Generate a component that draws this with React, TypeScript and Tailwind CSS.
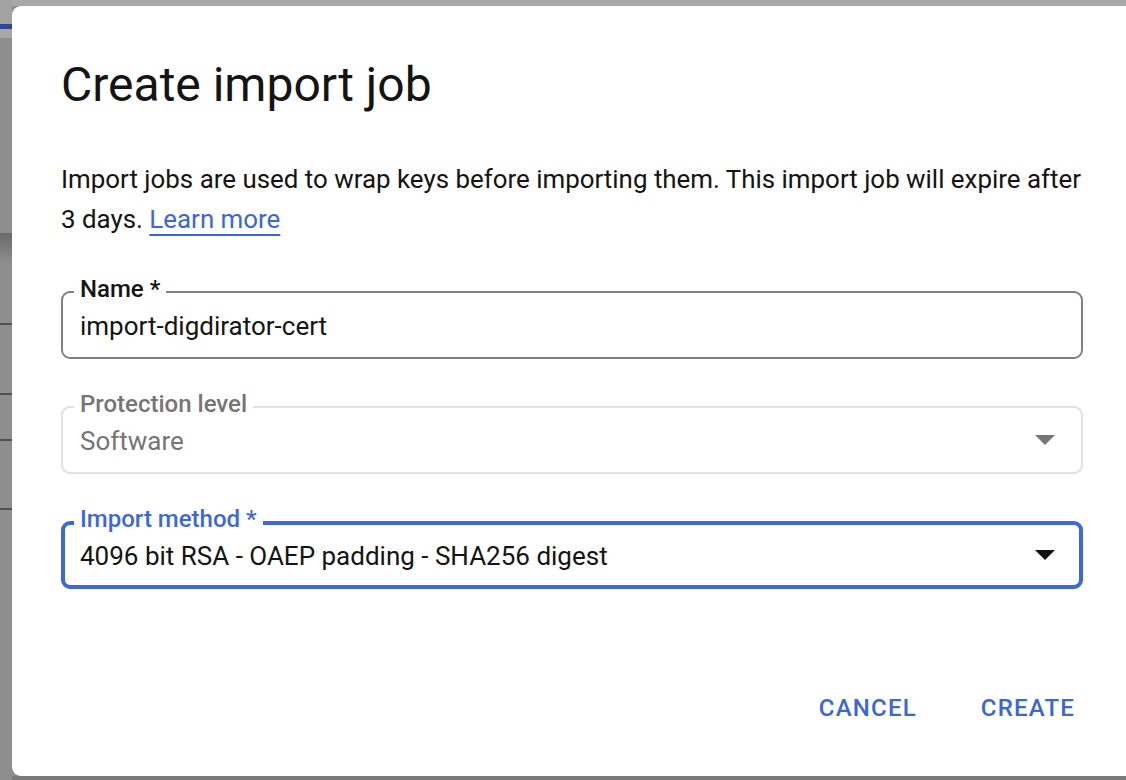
import React from "react";

type FieldProps = {
  label: string;
  value: string;
  variant: "default" | "disabled" | "focused";
  select?: boolean;
};

function Caret({ color }: { color: string }) {
  return (
    <svg width="20" height="10" viewBox="0 0 20 10" className="shrink-0">
      <path d="M0 0 L20 0 L10 10 Z" fill={color} />
    </svg>
  );
}

function Field(props: FieldProps) {
  const { label, value, variant, select } = props;

  const box =
    variant === "focused"
      ? "border-4 border-[#3d69d6] pl-[15px] pr-[24px]"
      : variant === "disabled"
      ? "border-2 border-[#e2e2e2] pl-[17px] pr-[26px]"
      : "border-2 border-[#808080] pl-[17px] pr-[26px]";

  const labelColor =
    variant === "focused"
      ? "text-[#3d69d6]"
      : variant === "disabled"
      ? "text-[#757575]"
      : "text-[#141414]";

  return (
    <div className="relative">
      <div className={`flex h-[68px] items-center rounded-[9px] ${box}`}>
        <div
          className={`flex-1 pt-[2px] text-[26px] ${
            variant === "disabled" ? "text-[#757575]" : "text-[#141414]"
          }`}
        >
          {value}
        </div>
        {select && (
          <Caret color={variant === "disabled" ? "#767676" : "#111111"} />
        )}
      </div>
      <span
        className={`absolute left-[13px] top-[-16px] bg-white px-[6px] text-[24px] leading-[28px] font-medium ${labelColor}`}
      >
        {label}
      </span>
    </div>
  );
}

export default function App() {
  return (
    <div
      className="flex h-[780px] w-[1126px] overflow-hidden bg-[#8e8e8e]"
      style={{ fontFamily: "Roboto, 'Liberation Sans', sans-serif" }}
    >
      {/* backdrop strip on the left */}
      <div className="flex w-[12px] shrink-0 flex-col">
        <div className="h-[24px] bg-[#a2a2a2]" />
        <div className="h-[5px] bg-[#2f4a8c]" />
        <div className="h-[9px] bg-[#a6a6a6]" />
        <div className="h-[195px] bg-[#8e8e8e]" />
        <div className="h-[30px] bg-gradient-to-b from-[#6a6a6a] to-[#8e8e8e]" />
        <div className="h-[60px] bg-[#8e8e8e]" />
        <div className="h-[2px] bg-[#505050]" />
        <div className="h-[68px] bg-[#8e8e8e]" />
        <div className="h-[2px] bg-[#505050]" />
        <div className="h-[44px] bg-[#8e8e8e]" />
        <div className="h-[2px] bg-[#505050]" />
        <div className="h-[67px] bg-[#8e8e8e]" />
        <div className="h-[2px] bg-[#505050]" />
      </div>

      <div className="flex flex-1 flex-col">
        <div className="h-[6px] bg-[#a8a8a8]" />
        <div className="flex h-[770px] flex-col rounded-l-[9px] bg-white pl-[49px] pr-[43px] pt-[51px]">
          <h1 className="text-[48px] leading-[56px] font-normal text-[#141414]">
            Create import job
          </h1>

          <p className="mt-[46px] text-[25.9px] leading-[40px] text-[#141414]">
            Import jobs are used to wrap keys before importing them. This import
            job will expire after <br />3 days.{" "}
            <a className="text-[#3c67d2] underline decoration-2 underline-offset-[6px]">
              Learn more
            </a>
          </p>

          <div className="mt-[52px] flex flex-col gap-[47px]">
            <Field label="Name *" value="import-digdirator-cert" variant="default" />
            <Field
              label="Protection level"
              value="Software"
              variant="disabled"
              select
            />
            <Field
              label="Import method *"
              value="4096 bit RSA - OAEP padding - SHA256 digest"
              variant="focused"
              select
            />
          </div>

          <div className="mt-[89px] flex justify-end gap-[50px] pr-[1px]">
            <button className="h-[60px] pl-[8px] pr-[7px] text-[24px] font-medium tracking-[0.05em] text-[#3c67d2]">
              CANCEL
            </button>
            <button className="h-[60px] px-[7px] text-[24px] font-medium tracking-[0.05em] text-[#3c67d2]">
              CREATE
            </button>
          </div>
        </div>
        <div className="h-[4px] bg-[#7a7a7a]" />
      </div>
    </div>
  );
}
